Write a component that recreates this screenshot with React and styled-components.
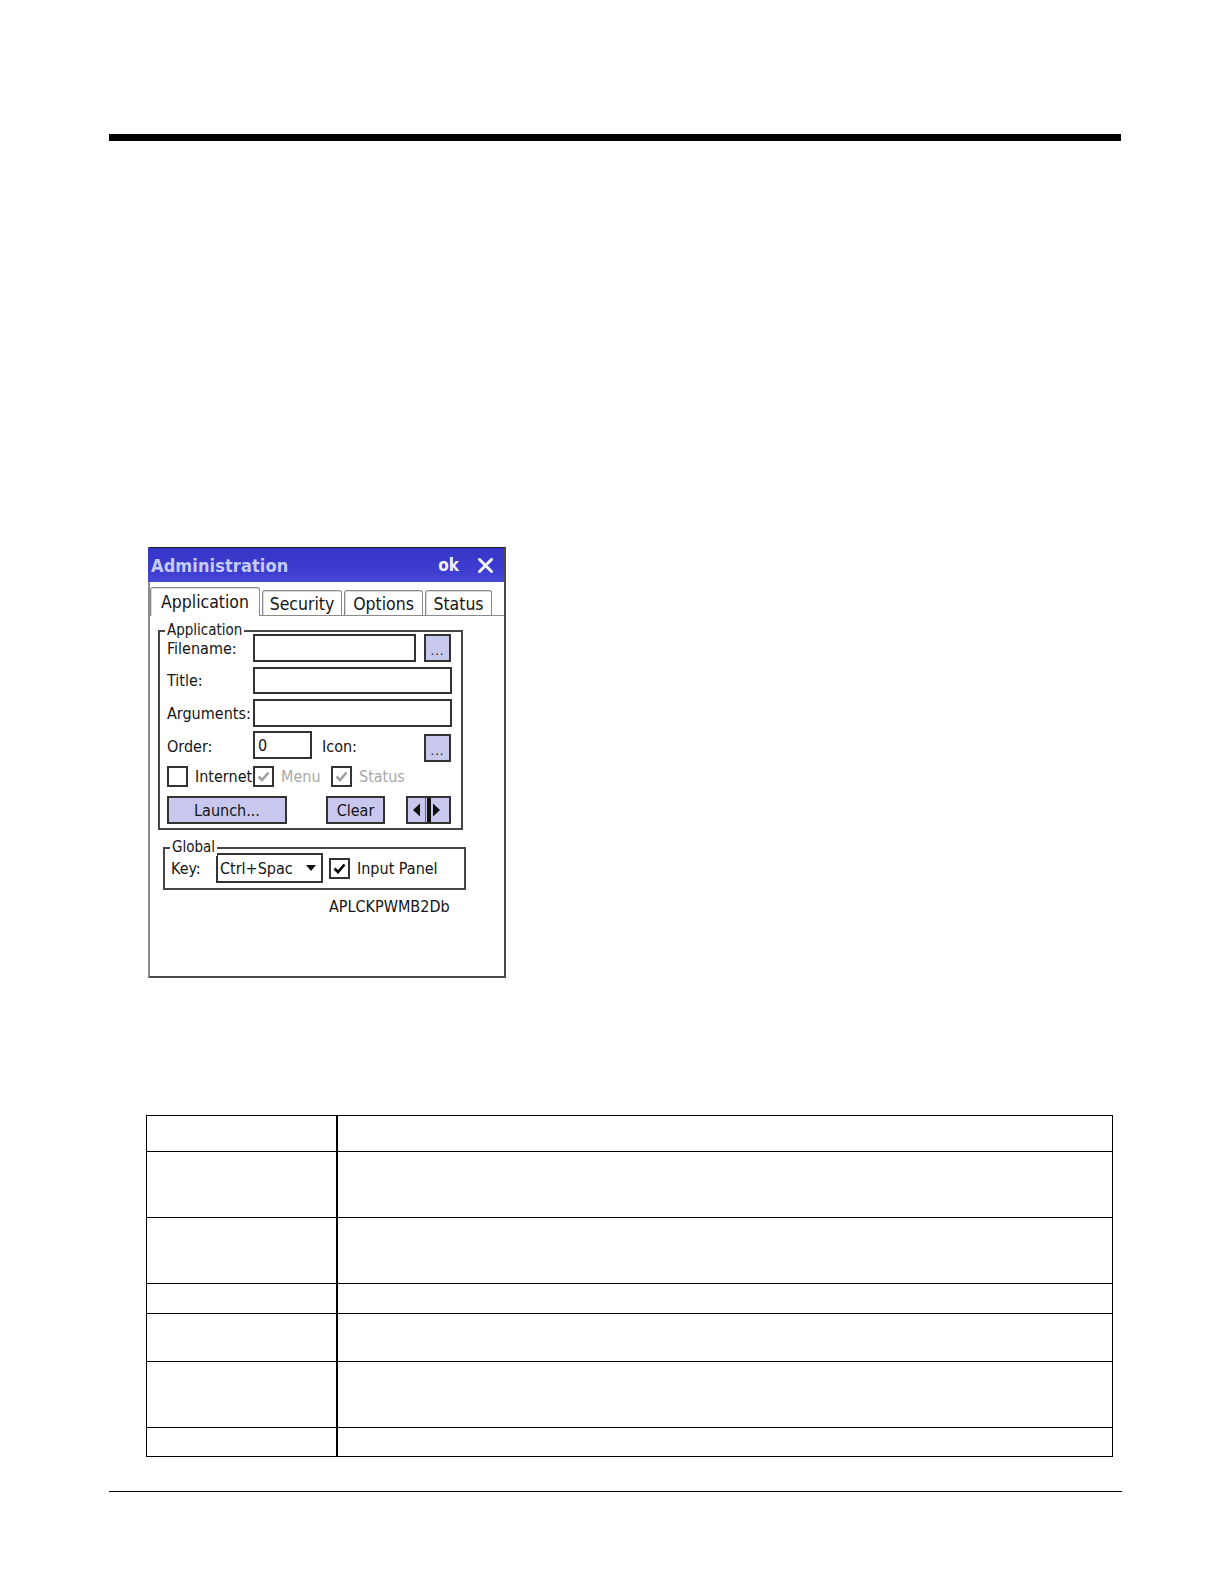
import React from 'react';
import styled, { createGlobalStyle } from 'styled-components';

const ui = `"DejaVu Sans Condensed", "DejaVu Sans", Tahoma, sans-serif`;

const GlobalStyle = createGlobalStyle`
  html, body {
    margin: 0;
    padding: 0;
    background: #fff;
  }
  body {
    font-family: ${ui};
    color: #141414;
  }
`;

const Page = styled.div`
  width: 1224px;
  min-height: 1584px;
  box-sizing: border-box;
  padding-top: 134px;
`;

const HeavyRule = styled.div`
  margin-left: 109px;
  width: 1012px;
  height: 7px;
  background: #000;
`;

const Dialog = styled.div`
  display: flex;
  flex-direction: column;
  margin: 406px 0 0 148px;
  width: 358px;
  height: 431px;
  box-sizing: border-box;
  border-top: 1px solid #1a1a1a;
  border-left: 2px solid #8c8c8c;
  border-right: 2px solid #4a4a4a;
  border-bottom: 2px solid #4a4a4a;
  background: #fff;
`;

const TitleBar = styled.div`
  display: flex;
  align-items: center;
  height: 34px;
  padding: 0 11px 0 3px;
  margin-left: -2px;
  background: linear-gradient(#3535c6, #3d3dd0 70%, #4848d8);
  color: #c6ccf8;
  font-weight: bold;
`;

const TitleText = styled.span`
  flex: 1;
  font-size: 18px;
  letter-spacing: 0.1px;
`;

const OkText = styled.span`
  font-size: 17px;
  color: #f2f2ff;
  margin-right: 19px;
`;

const TabStrip = styled.div`
  display: flex;
  align-items: flex-end;
  margin-top: 5px;
  height: 29px;
`;

const Tab = styled.div`
  display: flex;
  align-items: center;
  justify-content: center;
  box-sizing: border-box;
  width: ${p => p.$w}px;
  height: ${p => (p.$active ? 29 : 25)}px;
  padding-top: ${p => (p.$active ? 0 : 2)}px;
  border: 1px solid #8a8a8a;
  border-bottom: none;
  border-radius: 3px 3px 0 0;
  box-shadow: inset 1px 1px 0 #dadada;
  background: #fff;
  font-size: 17.5px;
  color: #151515;
`;

const TabRest = styled.div`
  flex: 1;
  display: flex;
  align-items: flex-end;
  gap: 2px;
  padding-left: 2px;
  height: 26px;
  box-sizing: border-box;
  border-bottom: 1px solid #8a8a8a;
`;

const Body = styled.div`
  display: flex;
  flex-direction: column;
  flex: 1;
`;

const Group = styled.div`
  position: relative;
  box-sizing: border-box;
  width: ${p => p.$w}px;
  margin: ${p => p.$top}px 0 0 ${p => p.$left}px;
  padding: ${p => p.$pad};
  border: 2px solid #474747;
`;

const GroupLabel = styled.span`
  position: absolute;
  top: -11px;
  left: ${p => p.$left || 5}px;
  padding: 0 2px;
  background: #fff;
  font-size: 15px;
  line-height: 18px;
`;

const Row = styled.div`
  display: flex;
  align-items: center;
  height: ${p => p.$h}px;
  margin-top: ${p => p.$top || 0}px;
`;

const FieldLabel = styled.span`
  width: ${p => p.$w || 86}px;
  flex: none;
  font-size: 16px;
  color: ${p => (p.$muted ? '#a9a9a9' : '#141414')};
`;

const TextBox = styled.div`
  display: flex;
  align-items: center;
  box-sizing: border-box;
  width: ${p => p.$w}px;
  height: 28px;
  align-self: ${p => p.$align || 'center'};
  padding-left: 3px;
  border: 2px solid #333;
  background: #fff;
  font-size: 16px;
`;

const DotButton = styled.div`
  display: flex;
  align-items: flex-end;
  justify-content: center;
  box-sizing: border-box;
  width: 27px;
  height: 28px;
  margin-left: ${p => p.$left || 0}px;
  align-self: ${p => p.$align || 'center'};
  padding-bottom: 3px;
  border: 2px solid #333;
  background: #c8c8ee;
  font-size: 13px;
  line-height: 13px;
  letter-spacing: 1px;
`;

const PushButton = styled.div`
  display: flex;
  align-items: center;
  justify-content: center;
  box-sizing: border-box;
  width: ${p => p.$w}px;
  height: 28px;
  margin-left: ${p => p.$left || 0}px;
  border: 2px solid #333;
  background: #c8c8ee;
  font-size: 16px;
`;

const CheckItem = styled.div`
  display: flex;
  align-items: center;
  gap: 7px;
  width: ${p => (p.$w ? `${p.$w}px` : 'auto')};
  flex: none;
  font-size: 16px;
  color: ${p => (p.$muted ? '#a9a9a9' : '#141414')};
  white-space: nowrap;
`;

const Box = styled.div`
  display: flex;
  align-items: center;
  justify-content: center;
  box-sizing: border-box;
  width: 21px;
  height: 21px;
  flex: none;
  border: 2px solid #333;
  background: #fff;
`;

const Combo = styled.div`
  display: flex;
  align-items: center;
  justify-content: space-between;
  box-sizing: border-box;
  width: 107px;
  height: 30px;
  padding: 0 5px 0 2px;
  border: 2px solid #333;
  background: #fff;
  font-size: 16px;
`;

const CodeText = styled.div`
  margin: 7px 0 0 179px;
  font-size: 16px;
`;

const SpecTable = styled.div`
  display: grid;
  grid-template-columns: 191px 1fr;
  grid-template-rows: 35px 66px 66px 30px 48px 66px 29px;
  margin: 137px 0 0 146px;
  width: 967px;
  box-sizing: border-box;
  border: 1px solid #000;
`;

const Cell = styled.div`
  border-top: ${p => (p.$first ? 'none' : '1px solid #000')};
  border-right: ${p => (p.$left ? '2px solid #000' : 'none')};
`;

const FootRule = styled.div`
  margin: 34px 0 0 109px;
  width: 1013px;
  height: 1px;
  background: #000;
`;

function Check({ on, muted }) {
  return (
    <Box>
      {on && (
        <svg width="15" height="15" viewBox="0 0 15 15">
          <path d="M2.5 7.5 L6 11 L12.5 3.5" fill="none" stroke={muted ? '#a0a0a0' : '#000'} strokeWidth="2.6" />
        </svg>
      )}
    </Box>
  );
}

function CloseGlyph() {
  return (
    <svg width="15" height="15" viewBox="0 0 15 15">
      <path d="M1.5 1.5 L13.5 13.5 M13.5 1.5 L1.5 13.5" stroke="#f2f2ff" strokeWidth="3" strokeLinecap="square" />
    </svg>
  );
}

function SplitArrows() {
  return (
    <svg width="41" height="24" viewBox="0 0 41 24">
      <polygon points="5,12 12,5.5 12,18.5" fill="#111" />
      <rect x="17" y="0" width="1" height="24" fill="#666" />
      <rect x="19" y="0" width="4" height="24" fill="#111" />
      <polygon points="25,5.5 25,18.5 32,12" fill="#111" />
    </svg>
  );
}

function DropArrow() {
  return (
    <svg width="10" height="6" viewBox="0 0 10 6">
      <polygon points="0,0 10,0 5,6" fill="#111" />
    </svg>
  );
}

const rows = [35, 66, 66, 30, 48, 66, 29];

export default function App() {
  return (
    <Page>
      <GlobalStyle />
      <HeavyRule />

      <Dialog>
        <TitleBar>
          <TitleText>Administration</TitleText>
          <OkText>ok</OkText>
          <CloseGlyph />
        </TitleBar>

        <TabStrip>
          <Tab $active $w={110}>Application</Tab>
          <TabRest>
            <Tab $w={80}>Security</Tab>
            <Tab $w={79}>Options</Tab>
            <Tab $w={67}>Status</Tab>
          </TabRest>
        </TabStrip>

        <Body>
          <Group $w={305} $top={14} $left={8} $pad="0 0 4px 7px">
            <GroupLabel>Application</GroupLabel>
            <Row $h={28} $top={2}>
              <FieldLabel>Filename:</FieldLabel>
              <TextBox $w={163} />
              <DotButton $left={8}>...</DotButton>
            </Row>
            <Row $h={27} $top={5}>
              <FieldLabel>Title:</FieldLabel>
              <TextBox $w={199} style={{ height: 27 }} />
            </Row>
            <Row $h={28} $top={5}>
              <FieldLabel>Arguments:</FieldLabel>
              <TextBox $w={199} />
            </Row>
            <Row $h={31} $top={4}>
              <FieldLabel>Order:</FieldLabel>
              <TextBox $w={59} $align="flex-start">0</TextBox>
              <FieldLabel $w={102} style={{ marginLeft: 10 }}>Icon:</FieldLabel>
              <DotButton $align="flex-end">...</DotButton>
            </Row>
            <Row $h={21} $top={4}>
              <CheckItem $w={86}>
                <Check />
                Internet
              </CheckItem>
              <CheckItem $w={78} $muted>
                <Check on muted />
                Menu
              </CheckItem>
              <CheckItem $muted>
                <Check on muted />
                Status
              </CheckItem>
            </Row>
            <Row $h={28} $top={9}>
              <PushButton $w={120}>Launch...</PushButton>
              <PushButton $w={59} $left={39}>Clear</PushButton>
              <PushButton $w={45} $left={21}>
                <SplitArrows />
              </PushButton>
            </Row>
          </Group>

          <Group $w={303} $top={17} $left={13} $pad="4px 0 5px 6px">
            <GroupLabel $left={5}>Global</GroupLabel>
            <Row $h={30}>
              <FieldLabel $w={45}>Key:</FieldLabel>
              <Combo>
                <span>Ctrl+Spac</span>
                <DropArrow />
              </Combo>
              <CheckItem style={{ marginLeft: 6 }}>
                <Check on />
                Input Panel
              </CheckItem>
            </Row>
          </Group>

          <CodeText>APLCKPWMB2Db</CodeText>
        </Body>
      </Dialog>

      <SpecTable>
        {rows.map((h, i) => (
          <React.Fragment key={i}>
            <Cell $left $first={i === 0} />
            <Cell $first={i === 0} />
          </React.Fragment>
        ))}
      </SpecTable>

      <FootRule />
    </Page>
  );
}
